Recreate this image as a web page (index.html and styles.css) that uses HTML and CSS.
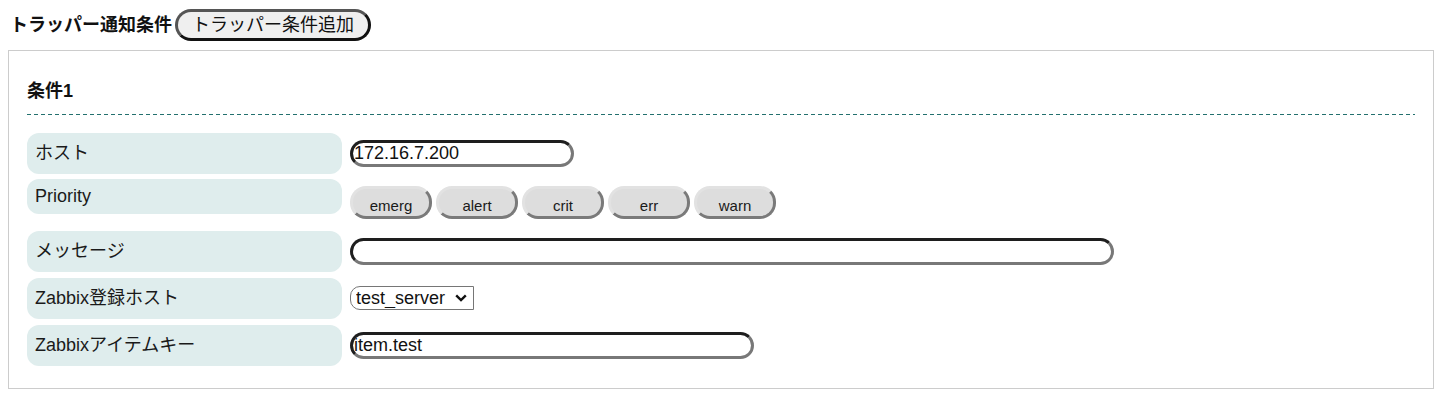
FILE: index.html
```html
<!DOCTYPE html>
<html lang="ja">
<head>
<meta charset="utf-8">
<title>トラッパー通知条件</title>
<link rel="stylesheet" href="styles.css">
</head>
<body>
<div class="title-row">
  <span class="title">トラッパー通知条件</span>
  <button class="add-btn" type="button">トラッパー条件追加</button>
</div>
<div class="box">
  <div class="cond-head">条件1</div>
  <div class="rows">
    <div class="row">
      <div class="label">ホスト</div>
      <div class="value"><input class="field field-host" type="text" value="172.16.7.200"></div>
    </div>
    <div class="row row-priority">
      <div class="label latin">Priority</div>
      <div class="value prio">
        <button class="prio-btn" type="button">emerg</button>
        <button class="prio-btn" type="button">alert</button>
        <button class="prio-btn" type="button">crit</button>
        <button class="prio-btn" type="button">err</button>
        <button class="prio-btn" type="button">warn</button>
      </div>
    </div>
    <div class="row">
      <div class="label">メッセージ</div>
      <div class="value"><input class="field field-msg" type="text" value=""></div>
    </div>
    <div class="row">
      <div class="label">Zabbix登録ホスト</div>
      <div class="value sel-value">
        <span class="select-wrap">
          <select class="select"><option>test_server</option></select>
          <svg class="chev" width="12" height="8" viewBox="0 0 12 8"><path d="M1.2 1.3 L6 6 L10.8 1.3" fill="none" stroke="#111" stroke-width="2.4"/></svg>
        </span>
      </div>
    </div>
    <div class="row">
      <div class="label">Zabbixアイテムキー</div>
      <div class="value"><input class="field field-item" type="text" value="item.test"></div>
    </div>
  </div>
</div>
</body>
</html>
```
FILE: styles.css
```css
body {
  margin: 8px;
  font-family: "Liberation Sans", "Noto Sans CJK JP", sans-serif;
  font-size: 18px;
  color: #111;
  background: #fff;
}

.title-row {
  display: flex;
  align-items: center;
  gap: 3px;
  height: 33px;
  margin-bottom: 9px;
}

.title {
  font-weight: bold;
  padding-left: 2px;
  line-height: 26px;
}

.add-btn {
  font-family: inherit;
  font-size: 18px;
  line-height: 26px;
  height: 32px;
  padding: 0 14px 0 14px;
  background: #efefef;
  color: #111;
  border: 3px solid;
  border-color: #555 #111 #111 #555;
  border-radius: 16px;
}

.box {
  border: 1px solid #cccccc;
  margin-right: 4px;
  padding: 0 18px 22px;
}

.cond-head {
  font-weight: bold;
  line-height: 26px;
  margin-top: 27px;
  padding-bottom: 10px;
  margin-bottom: 18px;
}

.cond-head::after {
  content: "";
  display: block;
  height: 1px;
  margin-top: 10px;
  margin-bottom: -10px;
  background: repeating-linear-gradient(90deg, #23706e 0 4px, transparent 4px 7px);
}

.rows {
  display: flex;
  flex-direction: column;
  gap: 6px;
}

.row {
  display: flex;
  align-items: flex-start;
  gap: 8px;
}

.row:first-child {
  margin-bottom: -1px;
}

.label {
  width: 315px;
  flex: none;
  box-sizing: border-box;
  background: #dfeded;
  border-radius: 12px;
  padding: 8px 8px;
  line-height: 25px;
  color: #1a1a1a;
}

.label.latin {
  line-height: 19px;
}

.value {
  padding-top: 7px;
}

.row-priority .value {
  padding-bottom: 6px;
}

.field {
  box-sizing: border-box;
  height: 27px;
  padding: 0 1px;
  font-family: inherit;
  font-size: 18px;
  color: #111;
  background: #fff;
  border: 3px solid;
  border-color: #1e1e1e #787878 #787878 #1e1e1e;
  border-radius: 14px;
  outline: none;
  display: block;
}

.field-host { width: 224px; }
.field-msg { width: 764px; }
.field-item { width: 404px; }

.prio {
  display: flex;
  gap: 4px;
}

.prio-btn {
  box-sizing: border-box;
  width: 82px;
  height: 33px;
  font-family: "Liberation Sans", sans-serif;
  font-size: 15px;
  color: #1a1a1a;
  background: #dddddd;
  border: 3px solid;
  border-color: #e2e2e2 #7a7a7a #7a7a7a #e2e2e2;
  border-radius: 16px;
  padding: 5px 0 0;
}

.sel-value {
  padding-top: 8px;
}

.select-wrap {
  position: relative;
  display: inline-block;
}

.select {
  appearance: none;
  -webkit-appearance: none;
  box-sizing: border-box;
  width: 124px;
  height: 24px;
  font-family: inherit;
  font-size: 18px;
  line-height: 20px;
  color: #111;
  background: #fff;
  border: 1px solid #767676;
  border-radius: 10px 0 0 10px;
  padding: 0 0 0 5px;
  display: block;
}

.chev {
  position: absolute;
  right: 7px;
  top: 8px;
  pointer-events: none;
}
```
